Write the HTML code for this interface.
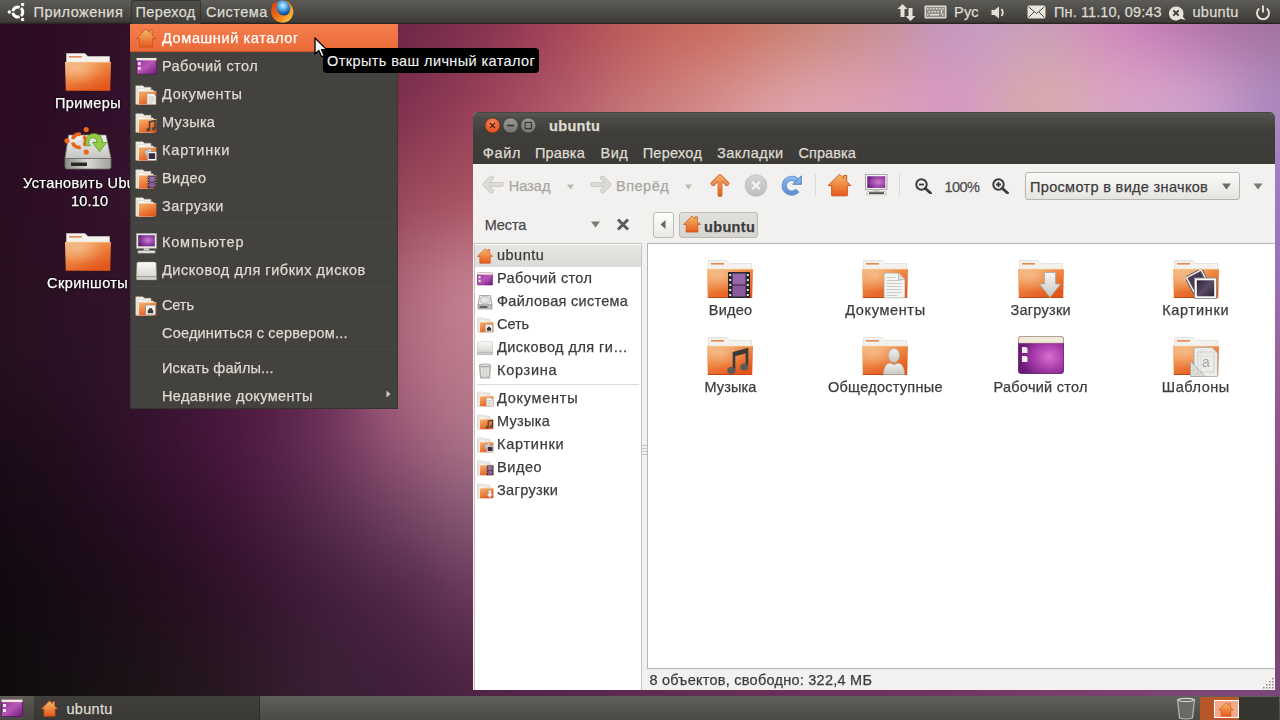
<!DOCTYPE html>
<html><head><meta charset="utf-8">
<style>
*{margin:0;padding:0;box-sizing:border-box}
html,body{width:1280px;height:720px;overflow:hidden}
body{position:relative;font-family:"Liberation Sans",sans-serif;font-size:14.5px;line-height:16px;letter-spacing:0.5px;background:#2a0c22}
.abs{position:absolute}
.t{position:absolute;white-space:nowrap;line-height:16px;-webkit-text-stroke:0.25px currentColor}
#toppanel{left:0;top:0;width:1280px;height:24px;background:linear-gradient(#5c5b56,#3d3c38 92%,#2b2521 96%)}
#toppanel .t{color:#dfdbd2;top:4px}
#botpanel{left:0;top:696px;width:1280px;height:24px;background:linear-gradient(#615f5a,#4a4944)}
#menu{left:130px;top:24px;width:268px;height:385px;background:#43423e;border-left:1px solid #383734;border-right:1px solid #383734;border-bottom:1px solid #343330}
.mi{position:absolute;left:0;width:266px;height:28px}
.mi .t{left:31px;top:5.5px;color:#dfdbd2}
.mi svg{position:absolute;left:4px;top:4px}
.sep{position:absolute;left:1px;width:264px;height:1px;background:#393834;border-bottom:1px solid #4a4945}
.dt{color:#fff;text-shadow:0 0 2px #000,0 1px 2px #000}
#win{left:473px;top:112px;width:802px;height:578px;background:#f2f1f0;border-radius:5px 5px 0 0;overflow:hidden}
#win .t{color:#3c3c3c}
.mb{color:#dfdbd2 !important}
.sb .t{left:24px}
</style></head><body>
<!--WALL--><div class="abs" style="left:0;top:0;width:1280px;height:720px;overflow:hidden"><div class="abs" style="left:0;top:0;width:1280px;height:720px;filter:blur(35px)"><div class="abs" style="left:-150px;top:-126px;width:190px;height:188px;background:#2a0c22"></div><div class="abs" style="left:40px;top:-126px;width:80px;height:188px;background:#2e0e26"></div><div class="abs" style="left:120px;top:-126px;width:80px;height:188px;background:#36122c"></div><div class="abs" style="left:200px;top:-126px;width:80px;height:188px;background:#4a1838"></div><div class="abs" style="left:280px;top:-126px;width:80px;height:188px;background:#561c3c"></div><div class="abs" style="left:360px;top:-126px;width:80px;height:188px;background:#6a2646"></div><div class="abs" style="left:440px;top:-126px;width:80px;height:188px;background:#82304e"></div><div class="abs" style="left:520px;top:-126px;width:80px;height:188px;background:#a44258"></div><div class="abs" style="left:600px;top:-126px;width:80px;height:188px;background:#c05e58"></div><div class="abs" style="left:680px;top:-126px;width:80px;height:188px;background:#c86a58"></div><div class="abs" style="left:760px;top:-126px;width:80px;height:188px;background:#c88070"></div><div class="abs" style="left:840px;top:-126px;width:80px;height:188px;background:#c49090"></div><div class="abs" style="left:920px;top:-126px;width:80px;height:188px;background:#c498c8"></div><div class="abs" style="left:1000px;top:-126px;width:80px;height:188px;background:#c8a0b8"></div><div class="abs" style="left:1080px;top:-126px;width:80px;height:188px;background:#d084bc"></div><div class="abs" style="left:1160px;top:-126px;width:80px;height:188px;background:#b070a8"></div><div class="abs" style="left:1240px;top:-126px;width:190px;height:188px;background:#a07098"></div><div class="abs" style="left:-150px;top:62px;width:190px;height:88px;background:#2a0c22"></div><div class="abs" style="left:40px;top:62px;width:80px;height:88px;background:#2e0e28"></div><div class="abs" style="left:120px;top:62px;width:80px;height:88px;background:#38122e"></div><div class="abs" style="left:200px;top:62px;width:80px;height:88px;background:#4a1a3a"></div><div class="abs" style="left:280px;top:62px;width:80px;height:88px;background:#642444"></div><div class="abs" style="left:360px;top:62px;width:80px;height:88px;background:#803050"></div><div class="abs" style="left:440px;top:62px;width:80px;height:88px;background:#9a4058"></div><div class="abs" style="left:520px;top:62px;width:80px;height:88px;background:#b05a68"></div><div class="abs" style="left:600px;top:62px;width:80px;height:88px;background:#c87878"></div><div class="abs" style="left:680px;top:62px;width:80px;height:88px;background:#d89090"></div><div class="abs" style="left:760px;top:62px;width:80px;height:88px;background:#e0a8b0"></div><div class="abs" style="left:840px;top:62px;width:80px;height:88px;background:#e0a0b8"></div><div class="abs" style="left:920px;top:62px;width:80px;height:88px;background:#d898c4"></div><div class="abs" style="left:1000px;top:62px;width:80px;height:88px;background:#dcb0a4"></div><div class="abs" style="left:1080px;top:62px;width:80px;height:88px;background:#e0a8c8"></div><div class="abs" style="left:1160px;top:62px;width:80px;height:88px;background:#d8a8d0"></div><div class="abs" style="left:1240px;top:62px;width:190px;height:88px;background:#a888c0"></div><div class="abs" style="left:-150px;top:150px;width:190px;height:90px;background:#2a0c22"></div><div class="abs" style="left:40px;top:150px;width:80px;height:90px;background:#301028"></div><div class="abs" style="left:120px;top:150px;width:80px;height:90px;background:#3a1430"></div><div class="abs" style="left:200px;top:150px;width:80px;height:90px;background:#4c1c3c"></div><div class="abs" style="left:280px;top:150px;width:80px;height:90px;background:#6a2848"></div><div class="abs" style="left:360px;top:150px;width:80px;height:90px;background:#9a4858"></div><div class="abs" style="left:440px;top:150px;width:80px;height:90px;background:#a85060"></div><div class="abs" style="left:520px;top:150px;width:80px;height:90px;background:#c07080"></div><div class="abs" style="left:600px;top:150px;width:80px;height:90px;background:#d08898"></div><div class="abs" style="left:680px;top:150px;width:80px;height:90px;background:#d898a8"></div><div class="abs" style="left:760px;top:150px;width:80px;height:90px;background:#d8a0b8"></div><div class="abs" style="left:840px;top:150px;width:80px;height:90px;background:#d0a0c0"></div><div class="abs" style="left:920px;top:150px;width:80px;height:90px;background:#c898c8"></div><div class="abs" style="left:1000px;top:150px;width:80px;height:90px;background:#c098c8"></div><div class="abs" style="left:1080px;top:150px;width:80px;height:90px;background:#b090c8"></div><div class="abs" style="left:1160px;top:150px;width:80px;height:90px;background:#a080c0"></div><div class="abs" style="left:1240px;top:150px;width:190px;height:90px;background:#9a78c0"></div><div class="abs" style="left:-150px;top:240px;width:190px;height:80px;background:#281020"></div><div class="abs" style="left:40px;top:240px;width:80px;height:80px;background:#2e1026"></div><div class="abs" style="left:120px;top:240px;width:80px;height:80px;background:#36142e"></div><div class="abs" style="left:200px;top:240px;width:80px;height:80px;background:#48203c"></div><div class="abs" style="left:280px;top:240px;width:80px;height:80px;background:#663050"></div><div class="abs" style="left:360px;top:240px;width:80px;height:80px;background:#b06878"></div><div class="abs" style="left:440px;top:240px;width:80px;height:80px;background:#c88898"></div><div class="abs" style="left:520px;top:240px;width:80px;height:80px;background:#c08090"></div><div class="abs" style="left:600px;top:240px;width:80px;height:80px;background:#b88098"></div><div class="abs" style="left:680px;top:240px;width:80px;height:80px;background:#b080a0"></div><div class="abs" style="left:760px;top:240px;width:80px;height:80px;background:#a880a8"></div><div class="abs" style="left:840px;top:240px;width:80px;height:80px;background:#a080b0"></div><div class="abs" style="left:920px;top:240px;width:80px;height:80px;background:#9878b0"></div><div class="abs" style="left:1000px;top:240px;width:80px;height:80px;background:#9078b0"></div><div class="abs" style="left:1080px;top:240px;width:80px;height:80px;background:#9078b8"></div><div class="abs" style="left:1160px;top:240px;width:80px;height:80px;background:#9478b8"></div><div class="abs" style="left:1240px;top:240px;width:190px;height:80px;background:#9a70b8"></div><div class="abs" style="left:-150px;top:320px;width:190px;height:80px;background:#241020"></div><div class="abs" style="left:40px;top:320px;width:80px;height:80px;background:#2c1228"></div><div class="abs" style="left:120px;top:320px;width:80px;height:80px;background:#341630"></div><div class="abs" style="left:200px;top:320px;width:80px;height:80px;background:#481a3c"></div><div class="abs" style="left:280px;top:320px;width:80px;height:80px;background:#622850"></div><div class="abs" style="left:360px;top:320px;width:80px;height:80px;background:#b06a80"></div><div class="abs" style="left:440px;top:320px;width:80px;height:80px;background:#c08090"></div><div class="abs" style="left:520px;top:320px;width:80px;height:80px;background:#b07090"></div><div class="abs" style="left:600px;top:320px;width:80px;height:80px;background:#a86890"></div><div class="abs" style="left:680px;top:320px;width:80px;height:80px;background:#a06890"></div><div class="abs" style="left:760px;top:320px;width:80px;height:80px;background:#986898"></div><div class="abs" style="left:840px;top:320px;width:80px;height:80px;background:#906898"></div><div class="abs" style="left:920px;top:320px;width:80px;height:80px;background:#886aa0"></div><div class="abs" style="left:1000px;top:320px;width:80px;height:80px;background:#886aa0"></div><div class="abs" style="left:1080px;top:320px;width:80px;height:80px;background:#8868a8"></div><div class="abs" style="left:1160px;top:320px;width:80px;height:80px;background:#8e64a0"></div><div class="abs" style="left:1240px;top:320px;width:190px;height:80px;background:#9a6098"></div><div class="abs" style="left:-150px;top:400px;width:190px;height:80px;background:#1c0c18"></div><div class="abs" style="left:40px;top:400px;width:80px;height:80px;background:#240e20"></div><div class="abs" style="left:120px;top:400px;width:80px;height:80px;background:#3a1230"></div><div class="abs" style="left:200px;top:400px;width:80px;height:80px;background:#4e1842"></div><div class="abs" style="left:280px;top:400px;width:80px;height:80px;background:#6a3058"></div><div class="abs" style="left:360px;top:400px;width:80px;height:80px;background:#9a5878"></div><div class="abs" style="left:440px;top:400px;width:80px;height:80px;background:#b07a8a"></div><div class="abs" style="left:520px;top:400px;width:80px;height:80px;background:#a06888"></div><div class="abs" style="left:600px;top:400px;width:80px;height:80px;background:#986088"></div><div class="abs" style="left:680px;top:400px;width:80px;height:80px;background:#906088"></div><div class="abs" style="left:760px;top:400px;width:80px;height:80px;background:#886088"></div><div class="abs" style="left:840px;top:400px;width:80px;height:80px;background:#806090"></div><div class="abs" style="left:920px;top:400px;width:80px;height:80px;background:#7e6098"></div><div class="abs" style="left:1000px;top:400px;width:80px;height:80px;background:#7e6098"></div><div class="abs" style="left:1080px;top:400px;width:80px;height:80px;background:#805e98"></div><div class="abs" style="left:1160px;top:400px;width:80px;height:80px;background:#885890"></div><div class="abs" style="left:1240px;top:400px;width:190px;height:80px;background:#8e5488"></div><div class="abs" style="left:-150px;top:480px;width:190px;height:80px;background:#160a14"></div><div class="abs" style="left:40px;top:480px;width:80px;height:80px;background:#1e0c1c"></div><div class="abs" style="left:120px;top:480px;width:80px;height:80px;background:#2a0e26"></div><div class="abs" style="left:200px;top:480px;width:80px;height:80px;background:#3e1434"></div><div class="abs" style="left:280px;top:480px;width:80px;height:80px;background:#522848"></div><div class="abs" style="left:360px;top:480px;width:80px;height:80px;background:#704060"></div><div class="abs" style="left:440px;top:480px;width:80px;height:80px;background:#8a5a78"></div><div class="abs" style="left:520px;top:480px;width:80px;height:80px;background:#885878"></div><div class="abs" style="left:600px;top:480px;width:80px;height:80px;background:#805078"></div><div class="abs" style="left:680px;top:480px;width:80px;height:80px;background:#785078"></div><div class="abs" style="left:760px;top:480px;width:80px;height:80px;background:#745080"></div><div class="abs" style="left:840px;top:480px;width:80px;height:80px;background:#705088"></div><div class="abs" style="left:920px;top:480px;width:80px;height:80px;background:#705088"></div><div class="abs" style="left:1000px;top:480px;width:80px;height:80px;background:#745088"></div><div class="abs" style="left:1080px;top:480px;width:80px;height:80px;background:#7a5088"></div><div class="abs" style="left:1160px;top:480px;width:80px;height:80px;background:#804c80"></div><div class="abs" style="left:1240px;top:480px;width:190px;height:80px;background:#84487c"></div><div class="abs" style="left:-150px;top:560px;width:190px;height:85px;background:#100a0e"></div><div class="abs" style="left:40px;top:560px;width:80px;height:85px;background:#180c16"></div><div class="abs" style="left:120px;top:560px;width:80px;height:85px;background:#220e1c"></div><div class="abs" style="left:200px;top:560px;width:80px;height:85px;background:#30122a"></div><div class="abs" style="left:280px;top:560px;width:80px;height:85px;background:#3e1c38"></div><div class="abs" style="left:360px;top:560px;width:80px;height:85px;background:#4e2444"></div><div class="abs" style="left:440px;top:560px;width:80px;height:85px;background:#6a3858"></div><div class="abs" style="left:520px;top:560px;width:80px;height:85px;background:#6a3860"></div><div class="abs" style="left:600px;top:560px;width:80px;height:85px;background:#6a3860"></div><div class="abs" style="left:680px;top:560px;width:80px;height:85px;background:#6a3860"></div><div class="abs" style="left:760px;top:560px;width:80px;height:85px;background:#6a3868"></div><div class="abs" style="left:840px;top:560px;width:80px;height:85px;background:#6c3a68"></div><div class="abs" style="left:920px;top:560px;width:80px;height:85px;background:#6e3e70"></div><div class="abs" style="left:1000px;top:560px;width:80px;height:85px;background:#744070"></div><div class="abs" style="left:1080px;top:560px;width:80px;height:85px;background:#784470"></div><div class="abs" style="left:1160px;top:560px;width:80px;height:85px;background:#7a4676"></div><div class="abs" style="left:1240px;top:560px;width:190px;height:85px;background:#7a4474"></div><div class="abs" style="left:-150px;top:645px;width:190px;height:195px;background:#0e0a0c"></div><div class="abs" style="left:40px;top:645px;width:80px;height:195px;background:#161014"></div><div class="abs" style="left:120px;top:645px;width:80px;height:195px;background:#1e1418"></div><div class="abs" style="left:200px;top:645px;width:80px;height:195px;background:#2a1824"></div><div class="abs" style="left:280px;top:645px;width:80px;height:195px;background:#3a2035"></div><div class="abs" style="left:360px;top:645px;width:80px;height:195px;background:#3e1e3a"></div><div class="abs" style="left:440px;top:645px;width:80px;height:195px;background:#4e2244"></div><div class="abs" style="left:520px;top:645px;width:80px;height:195px;background:#54264a"></div><div class="abs" style="left:600px;top:645px;width:80px;height:195px;background:#5c2a4e"></div><div class="abs" style="left:680px;top:645px;width:80px;height:195px;background:#642e54"></div><div class="abs" style="left:760px;top:645px;width:80px;height:195px;background:#6a3058"></div><div class="abs" style="left:840px;top:645px;width:80px;height:195px;background:#6c3260"></div><div class="abs" style="left:920px;top:645px;width:80px;height:195px;background:#703460"></div><div class="abs" style="left:1000px;top:645px;width:80px;height:195px;background:#744068"></div><div class="abs" style="left:1080px;top:645px;width:80px;height:195px;background:#7a4070"></div><div class="abs" style="left:1160px;top:645px;width:80px;height:195px;background:#7a4878"></div><div class="abs" style="left:1240px;top:645px;width:190px;height:195px;background:#7a4878"></div></div></div><!--/WALL-->

<svg width="0" height="0" style="position:absolute">
<defs>
  <linearGradient id="gOr" x1="0" y1="0" x2="0.6" y2="1">
    <stop offset="0" stop-color="#f4b27a"/><stop offset="0.45" stop-color="#ee8a45"/><stop offset="1" stop-color="#e4571c"/>
  </linearGradient>
  <linearGradient id="gHome" x1="0" y1="0" x2="0" y2="1">
    <stop offset="0" stop-color="#f2bc68"/><stop offset="1" stop-color="#e8581c"/>
  </linearGradient>
  <linearGradient id="gPur" x1="0" y1="0" x2="1" y2="1">
    <stop offset="0" stop-color="#8e2a96"/><stop offset="0.5" stop-color="#b856b8"/><stop offset="1" stop-color="#6e1c78"/>
  </linearGradient>
  <radialGradient id="gHl" cx="0.3" cy="0.25" r="0.55"><stop offset="0" stop-color="#fff4d8" stop-opacity="0.35"/><stop offset="1" stop-color="#fff4d8" stop-opacity="0"/></radialGradient>
  <symbol id="folder" viewBox="0 0 46 38">
    <path d="M1.5 0.5 H20 L23 3.5 H44.5 V12 H1.5Z" fill="#f4f2ee" stroke="#d8d4cc" stroke-width="0.6"/>
    <rect x="4" y="3" width="13" height="1.6" fill="#e8884e"/>
    <path d="M0 9 H46 L45.2 37.5 H0.8Z" fill="url(#gOr)"/>
    <path d="M0 9 H46 L45.2 37.5 H0.8Z" fill="url(#gHl)"/>
    <path d="M0.3 9.3 H45.7" stroke="#f8c890" stroke-width="0.7"/>
    <path d="M0.8 37.5 H45.2" stroke="#c44a14" stroke-width="1"/>
  </symbol>
  <symbol id="mfolder" viewBox="0 0 22 20">
    <path d="M0.8 0.8 H8 L9.5 2.3 H16 V19.3 H0.8Z" fill="#f4f1ec" stroke="#b8b0a4" stroke-width="0.6"/>
    <path d="M2.6 3.6 H9.5 L11 5 H18.5 V19.4 H2.6Z" fill="#faf8f4" stroke="#c4bcb0" stroke-width="0.5"/>
    <path d="M3.8 6.5 H21.3 V19.5 H3.8Z" fill="url(#gOr)"/>
    <path d="M3.8 6.5 H21.3" stroke="#f8c898" stroke-width="0.8"/>
  </symbol>
  <symbol id="home" viewBox="0 0 20 20">
    <path d="M10 1 L13.5 4.5 V2 H16 V7 L19.5 10.5 H16.5 V19 H3.5 V10.5 H0.5Z" fill="url(#gHome)" stroke="#c8501a" stroke-width="0.8" stroke-linejoin="round"/>
  </symbol>
  <symbol id="desk" viewBox="0 0 22 18">
    <rect x="0.5" y="0.5" width="21" height="17" rx="1" fill="url(#gPur)" stroke="#5a1460" stroke-width="0.8"/>
    <rect x="0.5" y="0.5" width="21" height="2.6" fill="#efe9d8"/>
    <rect x="2" y="5" width="3" height="3" fill="#efe6f0"/>
    <rect x="2" y="10" width="3" height="3" fill="#efe6f0"/>
  </symbol>

  <symbol id="fs" viewBox="0 0 16 16">
    <path d="M2.5 1.5 H13.5 L15 11 H1Z" fill="#e6e6e4" stroke="#8e8e8a" stroke-width="0.7"/>
    <ellipse cx="8" cy="6" rx="5" ry="3.4" fill="none" stroke="#b0b0ac" stroke-width="0.8"/>
    <rect x="1" y="11" width="14" height="4" fill="#c4c4c0" stroke="#8e8e8a" stroke-width="0.7"/>
    <rect x="2.5" y="12.3" width="8" height="1.4" fill="#3a3a38"/>
  </symbol>
  <symbol id="floppy" viewBox="0 0 22 20">
    <defs><linearGradient id="gFl" x1="0" y1="0" x2="0" y2="1"><stop offset="0" stop-color="#fbfbfa"/><stop offset="1" stop-color="#d6d6d2"/></linearGradient></defs>
    <path d="M3 0.5 H19 Q20.5 0.5 21 2 L21.5 16 H0.5 L1 2 Q1.5 0.5 3 0.5Z" fill="url(#gFl)" stroke="#a8a8a4" stroke-width="0.6"/>
    <rect x="0.5" y="16" width="21" height="3.5" rx="0.5" fill="#cfcfcb" stroke="#8c8c88" stroke-width="0.6"/>
  </symbol>
  <symbol id="comp" viewBox="0 0 22 22">
    <defs><radialGradient id="gScr2" cx="0.6" cy="0.45" r="0.7"><stop offset="0" stop-color="#d07ad8"/><stop offset="1" stop-color="#5c1672"/></radialGradient></defs>
    <rect x="0.5" y="0.5" width="21" height="15.5" fill="#eceae6" stroke="#a4a29e" stroke-width="0.7"/>
    <rect x="2.3" y="2.3" width="17.4" height="11.6" fill="url(#gScr2)"/>
    <path d="M8.5 16 H13.5 L14.5 18.5 H7.5Z" fill="#cfcdc9"/>
    <rect x="2" y="18.5" width="18" height="2.6" fill="#e4e2de" stroke="#8c8a86" stroke-width="0.6"/>
  </symbol>
  <symbol id="trash" viewBox="0 0 16 16">
    <path d="M2.5 2 H13.5 L12.5 15 H3.5Z" fill="#cfcfcc" stroke="#8e8e8a" stroke-width="0.8"/>
    <ellipse cx="8" cy="2.3" rx="5.5" ry="1.3" fill="#e8e8e6" stroke="#8e8e8a" stroke-width="0.7"/>
    <path d="M5 5 V13 M8 5 V13.5 M11 5 V13" stroke="#ededeb" stroke-width="1"/>
  </symbol>
  <symbol id="emb-doc" viewBox="0 0 10 12"><path d="M0.5 0.5 H7 L9.5 3 V11.5 H0.5Z" fill="#f2f2f0" stroke="#9a9a96" stroke-width="0.6"/><path d="M2 4 H8 M2 6 H8 M2 8 H8 M2 10 H6" stroke="#a8a8a4" stroke-width="0.6"/></symbol>
  <symbol id="emb-mus" viewBox="0 0 10 12"><path d="M3.5 9.5 V2 L9 0.5 V8.5" fill="none" stroke="#3a3a38" stroke-width="1.4"/><ellipse cx="2.3" cy="9.8" rx="2" ry="1.7" fill="#4a4a48"/><ellipse cx="7.8" cy="8.8" rx="2" ry="1.7" fill="#4a4a48"/></symbol>
  <symbol id="emb-pic" viewBox="0 0 12 12"><path d="M0.5 3 L6 0.5 L8 5 L2.5 7.5Z" fill="#e0e0de" stroke="#8a8a86" stroke-width="0.5"/><rect x="3" y="3.5" width="8.5" height="8" fill="#fafafa" stroke="#8a8a86" stroke-width="0.5"/><rect x="4.3" y="4.8" width="6" height="5.3" fill="#3a2a48"/></symbol>
  <symbol id="emb-vid" viewBox="0 0 10 14"><rect x="0" y="0" width="10" height="14" fill="#2c2a2c"/><rect x="2" y="0.8" width="6" height="5.8" fill="#9a6aac"/><rect x="2" y="7.4" width="6" height="5.8" fill="#8a5a9c"/><g fill="#d8d4c8"><rect x="0.5" y="1" width="1" height="1"/><rect x="0.5" y="4" width="1" height="1"/><rect x="0.5" y="7" width="1" height="1"/><rect x="0.5" y="10" width="1" height="1"/><rect x="8.5" y="1" width="1" height="1"/><rect x="8.5" y="4" width="1" height="1"/><rect x="8.5" y="7" width="1" height="1"/><rect x="8.5" y="10" width="1" height="1"/></g></symbol>
  <symbol id="emb-dl" viewBox="0 0 10 12"><path d="M3 0.5 H7 V6 H9.5 L5 11.5 L0.5 6 H3Z" fill="#f0f0ee" stroke="#9a9a96" stroke-width="0.6"/></symbol>
  <symbol id="emb-net" viewBox="0 0 10 10"><rect x="0.5" y="0.5" width="9" height="9" fill="#f4f4f2" stroke="#8a8a86" stroke-width="0.6"/><path d="M2.5 8 V5 H3.5 V3.5 H6.5 V5 H7.5 V8Z" fill="#3a3a38"/></symbol>

  <symbol id="e-doc" viewBox="0 0 22 26"><path d="M0.5 0.5 H15 L21.5 7 V25.5 H0.5Z" fill="#f4f4f2" stroke="#a4a4a0" stroke-width="0.8"/><path d="M15 0.5 V7 H21.5" fill="#dcdcda" stroke="#a4a4a0" stroke-width="0.6"/><path d="M3 5 H12 M3 8 H18 M3 11 H18 M3 14 H18 M3 17 H18 M3 20 H18 M3 23 H14" stroke="#b8b8b4" stroke-width="0.7"/></symbol>
  <symbol id="e-dl" viewBox="0 0 22 26"><defs><linearGradient id="gDl" x1="0" y1="0" x2="0" y2="1"><stop offset="0" stop-color="#f8f8f6"/><stop offset="1" stop-color="#c4c4c0"/></linearGradient></defs><path d="M5.5 0.5 H16.5 V12 H21.5 L11 25.5 L0.5 12 H5.5Z" fill="url(#gDl)" stroke="#a8a8a4" stroke-width="0.8" stroke-linejoin="round"/></symbol>
  <symbol id="e-pic" viewBox="0 0 31 29"><g transform="rotate(-28 11 11)"><rect x="2" y="2" width="19" height="18" fill="#ededeb" stroke="#5a5a56" stroke-width="0.9"/><rect x="4" y="4" width="15" height="14" fill="#4a3a54"/></g><rect x="8.5" y="8" width="22" height="20.5" fill="#fbfbfa" stroke="#8a8a86" stroke-width="0.9"/><defs><linearGradient id="gPh" x1="0" y1="0" x2="1" y2="1"><stop offset="0" stop-color="#2a2232"/><stop offset="0.5" stop-color="#5a4a64"/><stop offset="1" stop-color="#2e2636"/></linearGradient></defs><rect x="10.8" y="10.3" width="17.4" height="16" fill="url(#gPh)"/></symbol>
  <symbol id="e-vid" viewBox="0 0 22 26"><rect x="0" y="0" width="22" height="26" fill="#2a282a"/><rect x="4.5" y="1.5" width="13" height="11" fill="#9866ac"/><rect x="4.5" y="13.5" width="13" height="11" fill="#8a5aa0"/><g fill="#e8e4d8"><rect x="1.2" y="2" width="2" height="2"/><rect x="1.2" y="7" width="2" height="2"/><rect x="1.2" y="12" width="2" height="2"/><rect x="1.2" y="17" width="2" height="2"/><rect x="1.2" y="22" width="2" height="2"/><rect x="18.8" y="2" width="2" height="2"/><rect x="18.8" y="7" width="2" height="2"/><rect x="18.8" y="12" width="2" height="2"/><rect x="18.8" y="17" width="2" height="2"/><rect x="18.8" y="22" width="2" height="2"/></g></symbol>
  <symbol id="e-mus" viewBox="0 0 22 27"><path d="M7 22 V5 L20 1.5 V18" fill="none" stroke="#3a3a38" stroke-width="2.6"/><path d="M7 5 L20 1.5 V5 L7 8.5Z" fill="#3a3a38"/><ellipse cx="4.3" cy="22.5" rx="4" ry="3.6" fill="#5a5a58"/><ellipse cx="17.3" cy="19" rx="4" ry="3.6" fill="#5a5a58"/></symbol>
  <symbol id="e-pub" viewBox="0 0 22 27"><defs><linearGradient id="gPb" x1="0" y1="0" x2="0" y2="1"><stop offset="0" stop-color="#f0f0ee"/><stop offset="1" stop-color="#c8c8c4"/></linearGradient></defs><ellipse cx="11" cy="7.5" rx="5.5" ry="7" fill="url(#gPb)" stroke="#b0b0ac" stroke-width="0.6"/><path d="M0.5 26.5 Q0.5 16 7 15 Q11 18 15 15 Q21.5 16 21.5 26.5Z" fill="url(#gPb)" stroke="#b0b0ac" stroke-width="0.6"/></symbol>
  <symbol id="e-tpl" viewBox="0 0 28 30"><path d="M4 0.5 H22 L27.5 6 V29.5 H4Z" fill="#ececea" stroke="#a8a8a4" stroke-width="0.8"/><path d="M8 5 H24 V25 H8Z" fill="none" stroke="#c4c4c0" stroke-width="0.7"/><path d="M6 9 H26 M11 3 V27" stroke="#cfcfcb" stroke-width="0.5"/><text x="12" y="20" font-family="Liberation Sans" font-size="14" fill="#a4a4a0">a</text><path d="M0.5 14 L15 29.5 H0.5Z" fill="#dcdcda" stroke="#a4a4a0" stroke-width="0.8"/><path d="M3.5 22 L8 26.5 H3.5Z" fill="#ececea" stroke="#b4b4b0" stroke-width="0.5"/></symbol>

  <symbol id="desk48" viewBox="0 0 46 38">
    <defs><radialGradient id="gDk" cx="0.68" cy="0.55" r="0.65"><stop offset="0" stop-color="#d870d0"/><stop offset="0.55" stop-color="#a43aa8"/><stop offset="1" stop-color="#6c1c78"/></radialGradient></defs>
    <rect x="0.5" y="0.5" width="45" height="37" rx="2.5" fill="url(#gDk)" stroke="#5c1866" stroke-width="0.8"/>
    <path d="M0.5 3 Q0.5 0.5 3 0.5 H43 Q45.5 0.5 45.5 3 V7 H0.5Z" fill="#efe9d6" stroke="#b8b098" stroke-width="0.5"/>
    <path d="M4 11 H8 L9.5 12.5 V17 H4Z M4 20 H8 L9.5 21.5 V26 H4Z" fill="#f4eef4"/>
  </symbol></defs>
</svg>

<!-- TOP PANEL -->
<div id="toppanel" class="abs">
  <svg class="abs" style="left:7px;top:3px" width="19" height="19" viewBox="0 0 19 19"><path d="M13.95 5.11 A5.00 5.00 0 0 1 13.95 12.89 M12.59 13.67 A5.00 5.00 0 0 1 5.86 9.78 M5.86 8.22 A5.00 5.00 0 0 1 12.59 4.33" fill="none" stroke="#fff" stroke-width="3"/><circle cx="2.3" cy="9" r="1.7" fill="#fff"/><circle cx="15.6" cy="1.5" r="1.7" fill="#fff"/><circle cx="15.6" cy="16.5" r="1.7" fill="#fff"/></svg>
  <span class="t" style="left:33.5px;--w:89.5;letter-spacing:0.49px">Приложения</span>
  <div class="abs" style="left:130.5px;top:0;width:70.5px;height:24px;background:linear-gradient(#4f4e49,#3e3d39);border:1px solid #353430;border-bottom:none;border-radius:3px 3px 0 0"></div>
  <span class="t" style="left:135.5px;--w:60;letter-spacing:0.37px">Переход</span>
  <span class="t" style="left:206px">Система</span>
  <svg class="abs" style="left:271px;top:0" width="23" height="23" viewBox="0 0 23 23">
    <defs><radialGradient id="ffg" cx="0.55" cy="0.3" r="0.7"><stop offset="0" stop-color="#c8f0ff"/><stop offset="0.35" stop-color="#58b0e6"/><stop offset="0.7" stop-color="#1c5cac"/><stop offset="1" stop-color="#0c2a66"/></radialGradient>
    <linearGradient id="ffo" x1="0" y1="0.1" x2="1" y2="0.9"><stop offset="0" stop-color="#d8400e"/><stop offset="0.5" stop-color="#f07818"/><stop offset="1" stop-color="#fcd040"/></linearGradient></defs>
    <circle cx="11.3" cy="11.5" r="11" fill="url(#ffo)"/>
    <circle cx="11" cy="8.8" r="8.2" fill="url(#ffg)"/>
    <path d="M1.5 3.5 Q4 1.6 6.8 3.6 Q4.6 7 6.2 11 Q8.4 15.6 13.8 15.6 Q18 15 20.2 10.8 Q22.6 16.5 18 20.6 Q12 24.5 5.6 20.8 Q-0.4 16.8 0.4 9.8 Q0.7 6 1.5 3.5Z" fill="url(#ffo)"/>
  </svg>
  <!-- indicators -->
  <svg class="abs" style="left:897px;top:3px" width="20" height="19" viewBox="0 0 20 19">
    <path d="M5.5 1 L10.5 6 H7.5 V14 H3.5 V6 H0.5Z" fill="#e6e2d8"/>
    <path d="M13.5 18 L18.5 13 H15.5 V5 H11.5 V13 H8.5Z" fill="#e6e2d8"/>
  </svg>
  <svg class="abs" style="left:924px;top:5px" width="23" height="14" viewBox="0 0 23 14">
    <rect x="0.5" y="0.5" width="22" height="13" rx="1" fill="#dedad0"/>
    <rect x="2" y="2" width="19" height="10" fill="#8e8c86"/>
    <g fill="#e4e0d6"><rect x="3" y="3" width="1.5" height="1.5"/><rect x="6" y="3" width="1.5" height="1.5"/><rect x="9" y="3" width="1.5" height="1.5"/><rect x="12" y="3" width="1.5" height="1.5"/><rect x="15" y="3" width="1.5" height="1.5"/><rect x="18" y="3" width="1.5" height="1.5"/>
    <rect x="4.5" y="6" width="1.5" height="1.5"/><rect x="7.5" y="6" width="1.5" height="1.5"/><rect x="10.5" y="6" width="1.5" height="1.5"/><rect x="13.5" y="6" width="1.5" height="1.5"/><rect x="17" y="5" width="1" height="4"/>
    <rect x="3" y="9" width="1.5" height="1.5"/><rect x="6" y="9" width="9" height="1.5"/><rect x="18" y="9" width="1.5" height="1.5"/></g>
  </svg>
  <span class="t" style="left:954px;letter-spacing:0.3px">Рус</span>
  <svg class="abs" style="left:991px;top:6px" width="15" height="13" viewBox="0 0 15 13">
    <path d="M0.5 4 H3.5 L8 0.5 V12.5 L3.5 9 H0.5Z" fill="#e2ded4"/>
    <path d="M10.5 3 Q13 6.5 10.5 10" stroke="#e2ded4" stroke-width="1.8" fill="none"/>
  </svg>
  <svg class="abs" style="left:1027px;top:5px" width="19" height="14" viewBox="0 0 19 14">
    <rect x="0.5" y="0.5" width="18" height="13" rx="1.5" fill="#e8e4da"/>
    <path d="M1.5 1.8 L9.5 8.5 L17.5 1.8 M1.5 12.5 L7 7 M17.5 12.5 L12 7" stroke="#4a4945" stroke-width="1" fill="none"/>
  </svg>
  <span class="t" style="left:1054px;letter-spacing:0.1px">Пн. 11.10, 09:43</span>
  <svg class="abs" style="left:1168px;top:6px" width="19" height="15" viewBox="0 0 19 15">
    <path d="M8 0.5 A7 7 0 1 0 12.5 12.8 L17.5 14 L14.8 10.5 A7 7 0 0 0 8 0.5Z" fill="#e8e4da"/>
    <path d="M5.3 4.3 L10.7 9.7 M10.7 4.3 L5.3 9.7" stroke="#3c3b37" stroke-width="1.8"/>
  </svg>
  <span class="t" style="left:1192.5px;--w:46;letter-spacing:0.3px">ubuntu</span>
  <svg class="abs" style="left:1255px;top:5px" width="16" height="15" viewBox="0 0 16 15">
    <path d="M4.2 3.5 A6 6 0 1 0 11.8 3.5" stroke="#e6e2d8" stroke-width="1.9" fill="none"/>
    <path d="M8 0.5 V7.5" stroke="#e6e2d8" stroke-width="1.9"/>
  </svg>
</div>

<!--BOTTOM-->
<div id="botpanel" class="abs">
  <svg class="abs" style="left:1px;top:3px" width="22" height="18" viewBox="0 0 22 18"><use href="#desk"/></svg>
  <div class="abs" style="left:23px;top:0;width:11px;height:24px;background:linear-gradient(#5a5954,#45443f)"></div>
  <div class="abs" style="left:34px;top:0;width:226px;height:24px;background:linear-gradient(#403f3b,#393834);border-right:1px solid #2e2d2a"></div>
  <svg class="abs" style="left:41px;top:4px" width="17" height="17" viewBox="0 0 20 20"><use href="#home"/></svg>
  <span class="t" style="left:66.5px;top:4.5px;color:#dfdbd2;--w:46;letter-spacing:0.3px">ubuntu</span>
  <svg class="abs" style="left:1176px;top:1px" width="20" height="23" viewBox="0 0 20 23">
    <path d="M1.5 2.5 Q10 0 18.5 2.5 L16.5 21 Q10 23 3.5 21Z" fill="#6e6d68" stroke="#bdbbb5" stroke-width="1.2" fill-opacity="0.9"/>
    <ellipse cx="10" cy="3" rx="8" ry="1.6" fill="none" stroke="#dedcd6" stroke-width="1"/>
  </svg>
  <div class="abs" style="left:1200px;top:1px;width:39px;height:23px;background:#b8582a"></div>
  <div class="abs" style="left:1214px;top:4px;width:25px;height:18px;background:#f4a88c;border:1.5px solid #fff"></div>
  <svg class="abs" style="left:1218px;top:6px" width="16" height="15" viewBox="0 0 20 20"><use href="#home"/></svg>
  <div class="abs" style="left:1239px;top:1px;width:40px;height:23px;background:#35342f"></div>
</div>


<!--DESKTOP-->
<svg class="abs" style="left:65px;top:53px" width="46" height="38" viewBox="0 0 46 38"><use href="#folder"/></svg>
<span class="t dt" style="left:55px;top:95px;--w:66;letter-spacing:0.44px">Примеры</span>
<svg class="abs" style="left:64px;top:124px" width="50" height="46" viewBox="0 0 50 46">
  <defs><linearGradient id="hdd" x1="0" y1="0" x2="0" y2="1"><stop offset="0" stop-color="#f4f4f2"/><stop offset="1" stop-color="#c4c4c0"/></linearGradient>
  <linearGradient id="hddf" x1="0" y1="0" x2="1" y2="0"><stop offset="0" stop-color="#8a8a86"/><stop offset="0.5" stop-color="#d8d8d4"/><stop offset="1" stop-color="#a0a09c"/></linearGradient></defs>
  <path d="M4.6 11 H42 L47 34.5 H1Z" fill="url(#hdd)" stroke="#7a7a76" stroke-width="0.8"/>
  <ellipse cx="24" cy="24" rx="15" ry="8" fill="none" stroke="#d0d0cc" stroke-width="0.8"/>
  <path d="M1 34.5 H47 V43 Q47 45 45 45 H3 Q1 45 1 43Z" fill="url(#hddf)" stroke="#6a6a66" stroke-width="0.8"/>
  <rect x="7" y="38.5" width="16" height="3.5" fill="#2a2a28"/>
  <path d="M19.67 12.13 A6.60 6.60 0 0 1 19.67 21.47 M16.71 23.18 A6.60 6.60 0 0 1 8.62 18.51 M8.62 15.09 A6.60 6.60 0 0 1 16.71 10.42" fill="none" stroke="#e8661c" stroke-width="3.6"/>
  <circle cx="3" cy="16.8" r="2.6" fill="#e8661c"/><circle cx="22.2" cy="5.6" r="2.6" fill="#e8661c"/><circle cx="22.2" cy="28" r="2.6" fill="#e8661c"/>
  <path d="M22.5 22 A8.5 8.5 0 1 1 38.5 18.5 L42.5 18.5 L35.5 27.5 L28.5 18.5 L33 18.5 A4.2 4.2 0 1 0 26.5 21.5Z" fill="#94cc44" stroke="#5a9420" stroke-width="0.8" stroke-linejoin="round"/>
</svg>
<span class="t dt" style="left:23px;top:175px;letter-spacing:0.4px">Установить Ubuntu</span>
<span class="t dt" style="left:71px;top:193px;letter-spacing:0.2px">10.10</span>
<svg class="abs" style="left:65px;top:233px" width="46" height="38" viewBox="0 0 46 38"><use href="#folder"/></svg>
<span class="t dt" style="left:47px;top:275px;--w:81;letter-spacing:0.42px">Скриншоты</span>


<!--WINDOW-->
<div id="win" class="abs">
  <div class="abs" style="left:0;top:0;width:802px;height:52px;background:linear-gradient(#34332f 0,#585752 1px,#4c4b46 7px,#3f3e3a 20px,#3c3b37 52px)"></div>
  <svg class="abs" style="left:10px;top:5px" width="56" height="18" viewBox="0 0 56 18">
    <defs>
      <radialGradient id="bcl" cx="0.5" cy="0.35" r="0.6"><stop offset="0" stop-color="#f88a5c"/><stop offset="1" stop-color="#e0501e"/></radialGradient>
      <linearGradient id="bgr" x1="0" y1="0" x2="0" y2="1"><stop offset="0" stop-color="#9c9b96"/><stop offset="1" stop-color="#74736e"/></linearGradient>
    </defs>
    <circle cx="9.5" cy="8.5" r="7.6" fill="url(#bcl)" stroke="#3a2a22" stroke-width="0.6"/>
    <path d="M7 6 L12 11 M12 6 L7 11" stroke="#5a1a0a" stroke-width="1.2"/>
    <circle cx="27.6" cy="8.5" r="7.6" fill="url(#bgr)" stroke="#33322e" stroke-width="0.6"/>
    <path d="M24 8.5 H31.2" stroke="#33322e" stroke-width="1.3"/>
    <circle cx="45.3" cy="8.5" r="7.6" fill="url(#bgr)" stroke="#33322e" stroke-width="0.6"/>
    <rect x="42.2" y="5.4" width="6.2" height="6.2" fill="none" stroke="#33322e" stroke-width="1.1"/>
  </svg>
  <span class="t" style="left:76px;top:6px;color:#dfdbd2;font-weight:bold;--w:51;letter-spacing:0.34px">ubuntu</span>
  <span class="t mb" style="left:9.7px;top:32.7px;--w:38.1;letter-spacing:0.7px">Файл</span>
  <span class="t mb" style="left:61.9px;top:32.7px;--w:50;letter-spacing:0.18px">Правка</span>
  <span class="t mb" style="left:127.6px;top:32.7px;--w:27.2;letter-spacing:0.39px">Вид</span>
  <span class="t mb" style="left:169.7px;top:32.7px;--w:59.3;letter-spacing:0.26px">Переход</span>
  <span class="t mb" style="left:244px;top:32.7px;--w:66.4;letter-spacing:0.48px">Закладки</span>
  <span class="t mb" style="left:325.4px;top:32.7px;--w:57.5;letter-spacing:0.09px">Справка</span>

  <!-- toolbar -->
  <svg class="abs" style="left:8px;top:63px" width="23" height="19" viewBox="0 0 23 19">
    <path d="M20.5 9.5 H4.5 M10.5 3 L4 9.5 L10.5 16" fill="none" stroke="#cdcbc7" stroke-width="4.8" stroke-linecap="round" stroke-linejoin="round"/>
    <path d="M20.5 9.5 H4.5 M10.5 3 L4 9.5 L10.5 16" fill="none" stroke="#dddbd7" stroke-width="3" stroke-linecap="round" stroke-linejoin="round"/>
  </svg>
  <span class="t" style="left:35.7px;top:65.5px;color:#a8a6a2 !important;--w:41.7;letter-spacing:0.03px">Назад</span>
  <svg class="abs" style="left:93.5px;top:71.5px" width="7" height="6" viewBox="0 0 8 7"><path d="M0 0.5 H8 L4 6.5Z" fill="#bab8b4"/></svg>
  <svg class="abs" style="left:117px;top:63px" width="23" height="19" viewBox="0 0 23 19">
    <path d="M2.5 9.5 H18.5 M12.5 3 L19 9.5 L12.5 16" fill="none" stroke="#cdcbc7" stroke-width="4.8" stroke-linecap="round" stroke-linejoin="round"/>
    <path d="M2.5 9.5 H18.5 M12.5 3 L19 9.5 L12.5 16" fill="none" stroke="#dddbd7" stroke-width="3" stroke-linecap="round" stroke-linejoin="round"/>
  </svg>
  <span class="t" style="left:143px;top:65.5px;color:#a8a6a2 !important;--w:53;letter-spacing:0.51px">Вперёд</span>
  <svg class="abs" style="left:211.5px;top:71.5px" width="7" height="6" viewBox="0 0 8 7"><path d="M0 0.5 H8 L4 6.5Z" fill="#bab8b4"/></svg>
  <svg class="abs" style="left:237px;top:61px" width="20" height="24" viewBox="0 0 20 24">
    <defs><linearGradient id="gUp" gradientUnits="userSpaceOnUse" x1="0" y1="2" x2="0" y2="23"><stop offset="0" stop-color="#f8b070"/><stop offset="1" stop-color="#e85a18"/></linearGradient></defs>
    <path d="M10 21.8 V4.5 M3.2 10.5 L10 3.6 L16.8 10.5" fill="none" stroke="#c8581c" stroke-width="4.8" stroke-linecap="round" stroke-linejoin="round" stroke-opacity="0.85"/>
    <path d="M10 21.8 V4.5 M3.2 10.5 L10 3.6 L16.8 10.5" fill="none" stroke="url(#gUp)" stroke-width="3" stroke-linecap="round" stroke-linejoin="round"/>
  </svg>
  <svg class="abs" style="left:271px;top:62px" width="24" height="24" viewBox="0 0 24 24">
    <defs><linearGradient id="gSt" x1="0" y1="0" x2="0" y2="1"><stop offset="0" stop-color="#d6d6d4"/><stop offset="1" stop-color="#bcbcba"/></linearGradient></defs><circle cx="12" cy="11.5" r="10.8" fill="url(#gSt)" stroke="#b4b4b2" stroke-width="0.6"/>
    <path d="M8.2 7.7 L15.8 15.3 M15.8 7.7 L8.2 15.3" stroke="#f6f6f4" stroke-width="2.2"/>
  </svg>
  <svg class="abs" style="left:308px;top:62px" width="22" height="23" viewBox="0 0 22 23">
    <defs><linearGradient id="gRe" gradientUnits="userSpaceOnUse" x1="0" y1="3" x2="0" y2="21"><stop offset="0" stop-color="#8cb8ec"/><stop offset="1" stop-color="#5a8cd2"/></linearGradient></defs>
    <path d="M16.4 7 A7.4 7.4 0 1 0 16.4 16.4" fill="none" stroke="#4a7cc4" stroke-width="5.2" stroke-opacity="0.8"/>
    <path d="M16.4 7 A7.4 7.4 0 1 0 16.4 16.4" fill="none" stroke="url(#gRe)" stroke-width="3.4"/>
    <path d="M20.3 1.8 V10.3 H11.8Z" fill="url(#gRe)" stroke="#4a7cc4" stroke-width="0.9" stroke-linejoin="round"/>
  </svg>
  <div class="abs" style="left:342px;top:62px;width:1px;height:22px;background:#dcdad6"></div>
  <svg class="abs" style="left:354px;top:61px" width="25" height="24" viewBox="0 0 20 20"><use href="#home"/></svg>
  <svg class="abs" style="left:392px;top:62px" width="23" height="22" viewBox="0 0 23 22">
    <defs><radialGradient id="gScr" cx="0.62" cy="0.5" r="0.7"><stop offset="0" stop-color="#d078c8"/><stop offset="0.6" stop-color="#9a44a8"/><stop offset="1" stop-color="#5e1a72"/></radialGradient></defs>
    <rect x="0.5" y="0.5" width="21.5" height="15" fill="#f4f2f4" stroke="#9a9894" stroke-width="0.8"/>
    <rect x="2.3" y="2.3" width="18" height="11.6" fill="url(#gScr)"/>
    <rect x="8.5" y="15.5" width="6" height="2" fill="#c8c6c2"/>
    <path d="M2.5 17.5 H20.5 L21.5 20.8 H1.5Z" fill="#f6f6f4" stroke="#a4a29e" stroke-width="0.6"/>
    <rect x="4" y="18.3" width="15" height="1.6" fill="#3a3a38"/>
  </svg>
  <div class="abs" style="left:426px;top:62px;width:1px;height:22px;background:#dcdad6"></div>
  <svg class="abs" style="left:442px;top:66px" width="17" height="16" viewBox="0 0 17 16">
    <circle cx="6.5" cy="6.5" r="5.2" fill="none" stroke="#3c3c3c" stroke-width="2"/>
    <path d="M10.2 10.2 L15.5 15" stroke="#3c3c3c" stroke-width="2.8" stroke-linecap="round"/>
    <path d="M4 6.5 H9" stroke="#3c3c3c" stroke-width="1.8"/>
  </svg>
  <span class="t" style="left:471.5px;top:66.5px;color:#4c4c4c !important;--w:35;letter-spacing:-0.6px">100%</span>
  <svg class="abs" style="left:519px;top:66px" width="17" height="16" viewBox="0 0 17 16">
    <circle cx="6.5" cy="6.5" r="5.2" fill="none" stroke="#3c3c3c" stroke-width="2"/>
    <path d="M10.2 10.2 L15.5 15" stroke="#3c3c3c" stroke-width="2.8" stroke-linecap="round"/>
    <path d="M4 6.5 H9 M6.5 4 V9" stroke="#3c3c3c" stroke-width="1.8"/>
  </svg>
  <div class="abs" style="left:552px;top:60px;width:215px;height:28px;border:1px solid #b6b4b0;border-radius:3px;background:linear-gradient(#fbfbfa,#e6e4e0)"></div>
  <span class="t" style="left:557px;top:66.5px;--w:178;letter-spacing:0.33px">Просмотр в виде значков</span>
  <svg class="abs" style="left:749px;top:71px" width="9" height="7" viewBox="0 0 9 7"><path d="M0 0.5 H9 L4.5 6.5Z" fill="#6e6c68"/></svg>
  <svg class="abs" style="left:780px;top:71px" width="10" height="7" viewBox="0 0 10 7"><path d="M0.5 0.5 H9.5 L5 6.5Z" fill="#7a7874"/></svg>

  <!-- places header -->
  <span class="t" style="left:11.7px;top:105px;color:#4a4a4a !important;--w:41.6;letter-spacing:-0.11px">Места</span>
  <svg class="abs" style="left:118px;top:109px" width="9" height="7" viewBox="0 0 9 7"><path d="M0 0.5 H9 L4.5 6.5Z" fill="#7a7874"/></svg>
  <svg class="abs" style="left:143px;top:106px" width="14" height="13" viewBox="0 0 14 13"><path d="M2 1.5 L12 11.5 M12 1.5 L2 11.5" stroke="#5a5a58" stroke-width="3"/></svg>
  <!-- path bar -->
  <div class="abs" style="left:179.5px;top:99.5px;width:21px;height:26px;border:1px solid #bcbab6;border-radius:3px;background:linear-gradient(#fdfdfc,#ebe9e5)"></div>
  <svg class="abs" style="left:187px;top:108px" width="6" height="9" viewBox="0 0 6 9"><path d="M5.5 0 V9 L0.5 4.5Z" fill="#6a6864"/></svg>
  <div class="abs" style="left:206px;top:99.5px;width:79px;height:26px;border:1px solid #bcbab6;border-radius:3px;background:linear-gradient(#e2e0dc,#d8d6d2)"></div>
  <svg class="abs" style="left:210px;top:103px" width="18" height="18" viewBox="0 0 20 20"><use href="#home"/></svg>
  <span class="t" style="left:231px;top:106.5px;font-weight:bold;--w:51;letter-spacing:0.34px">ubuntu</span>

  <!-- sidebar -->
  <div class="abs sb" style="left:0.5px;top:131px;width:168px;height:447px;background:#fff;border:1px solid #c6c4c0;border-bottom:none">
    <div class="abs" style="left:0;top:1px;width:166px;height:22px;background:linear-gradient(#e8e6e2,#dcdad6)"></div>
  </div>
  <div class="abs" style="left:169px;top:331px;width:5px;height:13px;background:repeating-linear-gradient(#f2f1f0 0,#f2f1f0 2px,#c8c6c2 2px,#c8c6c2 3px)"></div>
  <!-- content -->
  <div class="abs" style="left:174px;top:131px;width:628px;height:426px;background:#fff;border:1px solid #b8b6b2;border-right:none"></div>
  <span class="t" style="left:176.4px;top:559.5px;--w:222.7;letter-spacing:0.25px">8 объектов, свободно: 322,4 МБ</span>
  <svg class="abs" style="left:789.5px;top:565px" width="12" height="12" viewBox="0 0 12 12"><g fill="#8e8c88"><rect x="9" y="1" width="1.5" height="1.5"/><rect x="6" y="4" width="1.5" height="1.5"/><rect x="9" y="4" width="1.5" height="1.5"/><rect x="3" y="7" width="1.5" height="1.5"/><rect x="6" y="7" width="1.5" height="1.5"/><rect x="9" y="7" width="1.5" height="1.5"/><rect x="0" y="10" width="1.5" height="1.5"/><rect x="3" y="10" width="1.5" height="1.5"/><rect x="6" y="10" width="1.5" height="1.5"/><rect x="9" y="10" width="1.5" height="1.5"/></g></svg>
</div>
<!--SIDEBAR-->
<div class="abs" style="left:473px;top:243px;width:170px;height:447px">
  <svg class="abs" style="left:4px;top:5px" width="16" height="16" viewBox="0 0 20 20"><use href="#home"/></svg>
  <span class="t" style="left:24px;top:4px;color:#3c3c3c;--w:47;letter-spacing:0.48px">ubuntu</span>
  <svg class="abs" style="left:4px;top:28px" width="16" height="16" viewBox="0 0 22 18"><use href="#desk"/></svg>
  <span class="t" style="left:24px;top:27px;color:#3c3c3c;--w:95;letter-spacing:0.35px">Рабочий стол</span>
  <svg class="abs" style="left:4px;top:51px" width="16" height="16" viewBox="0 0 16 16"><use href="#fs"/></svg>
  <span class="t" style="left:24px;top:50px;color:#3c3c3c;--w:131;letter-spacing:0.29px">Файловая система</span>
  <svg class="abs" style="left:4px;top:74px" width="17" height="16" viewBox="0 0 22 20"><use href="#mfolder"/><use href="#emb-net" x="10" y="8.5" width="11" height="11"/></svg>
  <span class="t" style="left:24px;top:73px;color:#3c3c3c;--w:32;letter-spacing:-0.07px">Сеть</span>
  <svg class="abs" style="left:4px;top:97px" width="16" height="16" viewBox="0 0 22 20"><use href="#floppy"/></svg>
  <span class="t" style="left:24px;top:96px;color:#3c3c3c;--w:131;letter-spacing:0.44px">Дисковод для ги…</span>
  <svg class="abs" style="left:4px;top:120px" width="16" height="16" viewBox="0 0 16 16"><use href="#trash"/></svg>
  <span class="t" style="left:24px;top:119px;color:#3c3c3c;--w:60;letter-spacing:0.73px">Корзина</span>
  <svg class="abs" style="left:4px;top:148px" width="17" height="16" viewBox="0 0 22 20"><use href="#mfolder"/><use href="#emb-doc" x="11.5" y="8" width="10" height="12"/></svg>
  <span class="t" style="left:24px;top:147px;color:#3c3c3c;--w:81;letter-spacing:0.74px">Документы</span>
  <svg class="abs" style="left:4px;top:171px" width="17" height="16" viewBox="0 0 22 20"><use href="#mfolder"/><use href="#emb-mus" x="11" y="7" width="10" height="12"/></svg>
  <span class="t" style="left:24px;top:170px;color:#3c3c3c;--w:53;letter-spacing:0.31px">Музыка</span>
  <svg class="abs" style="left:4px;top:194px" width="17" height="16" viewBox="0 0 22 20"><use href="#mfolder"/><use href="#emb-pic" x="9" y="7" width="13" height="13"/></svg>
  <span class="t" style="left:24px;top:193px;color:#3c3c3c;--w:67;letter-spacing:0.74px">Картинки</span>
  <svg class="abs" style="left:4px;top:217px" width="17" height="16" viewBox="0 0 22 20"><use href="#mfolder"/><use href="#emb-vid" x="12.5" y="6" width="9" height="14"/></svg>
  <span class="t" style="left:24px;top:216px;color:#3c3c3c;--w:45;letter-spacing:0.58px">Видео</span>
  <svg class="abs" style="left:4px;top:240px" width="17" height="16" viewBox="0 0 22 20"><use href="#mfolder"/><use href="#emb-dl" x="12" y="8" width="9" height="12"/></svg>
  <span class="t" style="left:24px;top:239px;color:#3c3c3c;--w:61;letter-spacing:0.35px">Загрузки</span>
  <div class="abs" style="left:4px;top:141px;width:162px;height:1px;background:#dcdad6"></div>
</div>

<!--CONTENT-->
<svg class="abs" style="left:707.4px;top:260px" width="50" height="42" viewBox="0 0 50 42" overflow="visible"><use href="#folder" width="46" height="38"/><use href="#e-vid" x="21" y="12" width="22" height="26"/></svg>
<span class="t" style="left:708.8px;top:301.6px;color:#3c3c3c;--w:43.3;letter-spacing:0.21px">Видео</span>
<svg class="abs" style="left:862.3px;top:260px" width="50" height="42" viewBox="0 0 50 42" overflow="visible"><use href="#folder" width="46" height="38"/><use href="#e-doc" x="21.5" y="12.5" width="22" height="26"/></svg>
<span class="t" style="left:845.2px;top:301.6px;color:#3c3c3c;--w:80.2;letter-spacing:0.64px">Документы</span>
<svg class="abs" style="left:1017.6px;top:260px" width="50" height="42" viewBox="0 0 50 42" overflow="visible"><use href="#folder" width="46" height="38"/><use href="#e-dl" x="21" y="12" width="22" height="26"/></svg>
<span class="t" style="left:1010.4px;top:301.6px;color:#3c3c3c;--w:60.4;letter-spacing:0.27px">Загрузки</span>
<svg class="abs" style="left:1172.6px;top:260px" width="50" height="42" viewBox="0 0 50 42" overflow="visible"><use href="#folder" width="46" height="38"/><use href="#e-pic" x="13" y="10" width="31" height="29"/></svg>
<span class="t" style="left:1162.2px;top:301.6px;color:#3c3c3c;--w:66.7;letter-spacing:0.7px">Картинки</span>
<svg class="abs" style="left:707.4px;top:337px" width="50" height="42" viewBox="0 0 50 42" overflow="visible"><use href="#folder" width="46" height="38"/><use href="#e-mus" x="20" y="11" width="22" height="27"/></svg>
<span class="t" style="left:704.4px;top:378.7px;color:#3c3c3c;--w:52;letter-spacing:0.13px">Музыка</span>
<svg class="abs" style="left:862.3px;top:337px" width="50" height="42" viewBox="0 0 50 42" overflow="visible"><use href="#folder" width="46" height="38"/><use href="#e-pub" x="21" y="11" width="22" height="27"/></svg>
<span class="t" style="left:828.0px;top:378.7px;color:#3c3c3c;--w:114.6;letter-spacing:0.27px">Общедоступные</span>
<svg class="abs" style="left:1017.6px;top:336px" width="46" height="38" viewBox="0 0 46 38"><use href="#desk48"/></svg>
<span class="t" style="left:993.5px;top:378.7px;color:#3c3c3c;--w:94.1;letter-spacing:0.27px">Рабочий стол</span>
<svg class="abs" style="left:1172.6px;top:337px" width="50" height="42" viewBox="0 0 50 42" overflow="visible"><use href="#folder" width="46" height="38"/><use href="#e-tpl" x="17" y="10" width="28" height="30"/></svg>
<span class="t" style="left:1161.8px;top:378.7px;color:#3c3c3c;--w:67.7;letter-spacing:0.55px">Шаблоны</span>



<!--MENU-->
<div id="menu" class="abs">
  <div class="abs" style="left:-1px;top:0;width:268px;height:28px;background:linear-gradient(#f47e4e,#ea6a38);border-bottom:1px solid #c95428"></div>
  <div class="mi" style="top:0px"><svg class="abs" style="left:5px;top:4px" width="20" height="20" viewBox="0 0 20 20"><use href="#home"/></svg><span class="t" style="left:31px;top:5.5px;color:#ffffff;--w:136.5;letter-spacing:0.62px">Домашний каталог</span></div>
  <div class="mi" style="top:28px"><svg class="abs" style="left:5px;top:5px" width="21" height="18" viewBox="0 0 22 18"><use href="#desk"/></svg><span class="t" style="left:31px;top:5.5px;color:#dfdbd2;--w:95.9;letter-spacing:0.42px">Рабочий стол</span></div>
  <div class="mi" style="top:56px"><svg class="abs" style="left:4px;top:5px" width="22" height="20" viewBox="0 0 22 20"><use href="#mfolder"/><use href="#emb-doc" x="11.5" y="8" width="10" height="12"/></svg><span class="t" style="left:31px;top:5.5px;color:#dfdbd2;--w:80.3;letter-spacing:0.65px">Документы</span></div>
  <div class="mi" style="top:84px"><svg class="abs" style="left:4px;top:5px" width="22" height="20" viewBox="0 0 22 20"><use href="#mfolder"/><use href="#emb-mus" x="11" y="7" width="10" height="12"/></svg><span class="t" style="left:31px;top:5.5px;color:#dfdbd2;--w:53.1;letter-spacing:0.33px">Музыка</span></div>
  <div class="mi" style="top:112px"><svg class="abs" style="left:4px;top:5px" width="22" height="20" viewBox="0 0 22 20"><use href="#mfolder"/><use href="#emb-pic" x="9" y="7" width="13" height="13"/></svg><span class="t" style="left:31px;top:5.5px;color:#dfdbd2;--w:67.8;letter-spacing:0.85px">Картинки</span></div>
  <div class="mi" style="top:140px"><svg class="abs" style="left:4px;top:5px" width="22" height="20" viewBox="0 0 22 20"><use href="#mfolder"/><use href="#emb-vid" x="12.5" y="6" width="9" height="14"/></svg><span class="t" style="left:31px;top:5.5px;color:#dfdbd2;--w:44.4;letter-spacing:0.45px">Видео</span></div>
  <div class="mi" style="top:168px"><svg class="abs" style="left:4px;top:5px" width="22" height="20" viewBox="0 0 22 20"><use href="#mfolder"/></svg><span class="t" style="left:31px;top:5.5px;color:#dfdbd2;--w:61.5;letter-spacing:0.42px">Загрузки</span></div>
  <div class="mi" style="top:204px"><svg class="abs" style="left:5px;top:5px" width="21" height="21" viewBox="0 0 22 22"><use href="#comp"/></svg><span class="t" style="left:31px;top:5.5px;color:#dfdbd2;--w:81.9;letter-spacing:0.8px">Компьютер</span></div>
  <div class="mi" style="top:232px"><svg class="abs" style="left:5px;top:5px" width="21" height="20" viewBox="0 0 22 20"><use href="#floppy"/></svg><span class="t" style="left:31px;top:5.5px;color:#dfdbd2;--w:203.7;letter-spacing:0.54px">Дисковод для гибких дисков</span></div>
  <div class="mi" style="top:267px"><svg class="abs" style="left:4px;top:5px" width="22" height="20" viewBox="0 0 22 20"><use href="#mfolder"/><use href="#emb-net" x="10" y="8.5" width="11" height="11"/></svg><span class="t" style="left:31px;top:5.5px;color:#dfdbd2;--w:31.9;letter-spacing:-0.1px">Сеть</span></div>
  <div class="mi" style="top:295px"><span class="t" style="left:31px;top:5.5px;color:#dfdbd2;--w:185.6;letter-spacing:0.2px">Соединиться с сервером...</span></div>
  <div class="mi" style="top:330px"><span class="t" style="left:31px;top:5.5px;color:#dfdbd2;--w:111.5;letter-spacing:0.15px">Искать файлы...</span></div>
  <div class="mi" style="top:358px"><span class="t" style="left:31px;top:5.5px;color:#dfdbd2;--w:150.6;letter-spacing:0.38px">Недавние документы</span></div>
  <div class="sep" style="top:198px"></div>
  <div class="sep" style="top:262px"></div>
  <div class="sep" style="top:325px"></div>
  <svg class="abs" style="left:255px;top:366px" width="5" height="8" viewBox="0 0 5 8"><path d="M0.5 0.5 L4.5 4 L0.5 7.5Z" fill="#cfcbc2"/></svg>
</div>
<div class="abs" style="left:323px;top:48px;width:216px;height:24.5px;background:#000;border-radius:4px"></div>
<span class="t" style="left:327px;top:53px;color:#f4f4f2;-webkit-text-stroke:0.1px #f4f4f2;--w:208;letter-spacing:0.4px">Открыть ваш личный каталог</span>
<svg class="abs" style="left:313.5px;top:37px" width="14" height="21" viewBox="0 0 14 21">
  <path d="M1 1 V17 L4.8 13.5 L7.6 19.8 L10.2 18.6 L7.5 12.6 H12.6Z" fill="#f4f4f4" stroke="#000" stroke-width="1.3" stroke-linejoin="round"/>
</svg>


</body></html>
